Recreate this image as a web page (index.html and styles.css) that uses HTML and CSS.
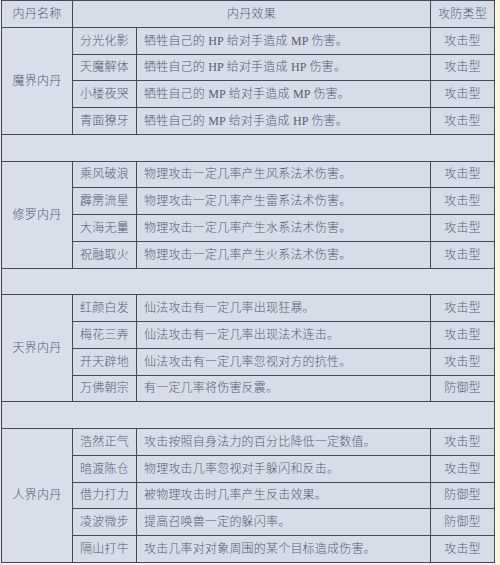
FILE: index.html
```html
<!DOCTYPE html>
<html lang="zh">
<head>
<meta charset="utf-8">
<title>内丹效果</title>
<link rel="stylesheet" href="styles.css">
</head>
<body>
<div class="page">
<table class="pills">
  <colgroup>
    <col class="c-group">
    <col class="c-name">
    <col class="c-desc">
    <col class="c-type">
  </colgroup>
  <tr class="head">
    <td>内丹名称</td>
    <td colspan="2">内丹效果</td>
    <td>攻防类型</td>
  </tr>

  <tr><td class="group" rowspan="4">魔界内丹</td><td class="name">分光化影</td><td class="desc">牺牲自己的 HP 给对手造成 MP 伤害。</td><td class="type">攻击型</td></tr>
  <tr><td class="name">天魔解体</td><td class="desc">牺牲自己的 HP 给对手造成 HP 伤害。</td><td class="type">攻击型</td></tr>
  <tr><td class="name">小楼夜哭</td><td class="desc">牺牲自己的 MP 给对手造成 MP 伤害。</td><td class="type">攻击型</td></tr>
  <tr><td class="name">青面獠牙</td><td class="desc">牺牲自己的 MP 给对手造成 HP 伤害。</td><td class="type">攻击型</td></tr>
  <tr class="spacer"><td colspan="4"></td></tr>

  <tr><td class="group" rowspan="4">修罗内丹</td><td class="name">乘风破浪</td><td class="desc">物理攻击一定几率产生风系法术伤害。</td><td class="type">攻击型</td></tr>
  <tr><td class="name">霹雳流星</td><td class="desc">物理攻击一定几率产生雷系法术伤害。</td><td class="type">攻击型</td></tr>
  <tr><td class="name">大海无量</td><td class="desc">物理攻击一定几率产生水系法术伤害。</td><td class="type">攻击型</td></tr>
  <tr><td class="name">祝融取火</td><td class="desc">物理攻击一定几率产生火系法术伤害。</td><td class="type">攻击型</td></tr>
  <tr class="spacer"><td colspan="4"></td></tr>

  <tr><td class="group" rowspan="4">天界内丹</td><td class="name">红颜白发</td><td class="desc">仙法攻击有一定几率出现狂暴。</td><td class="type">攻击型</td></tr>
  <tr><td class="name">梅花三弄</td><td class="desc">仙法攻击有一定几率出现法术连击。</td><td class="type">攻击型</td></tr>
  <tr><td class="name">开天辟地</td><td class="desc">仙法攻击有一定几率忽视对方的抗性。</td><td class="type">攻击型</td></tr>
  <tr><td class="name">万佛朝宗</td><td class="desc">有一定几率将伤害反震。</td><td class="type">防御型</td></tr>
  <tr class="spacer"><td colspan="4"></td></tr>

  <tr><td class="group" rowspan="5">人界内丹</td><td class="name">浩然正气</td><td class="desc">攻击按照自身法力的百分比降低一定数值。</td><td class="type">攻击型</td></tr>
  <tr><td class="name">暗渡陈仓</td><td class="desc">物理攻击几率忽视对手躲闪和反击。</td><td class="type">攻击型</td></tr>
  <tr><td class="name">借力打力</td><td class="desc">被物理攻击时几率产生反击效果。</td><td class="type">防御型</td></tr>
  <tr><td class="name">凌波微步</td><td class="desc">提高召唤兽一定的躲闪率。</td><td class="type">防御型</td></tr>
  <tr><td class="name">隔山打牛</td><td class="desc">攻击几率对对象周围的某个目标造成伤害。</td><td class="type">攻击型</td></tr>
</table>
</div>
</body>
</html>
```

FILE: styles.css
```css
html, body {
  margin: 0;
  padding: 0;
  background: #fcf8da;
}

.page {
  width: 500px;
  height: 565px;
  padding: 0 0 0 1px;
  box-sizing: border-box;
  background: linear-gradient(to right, #e6e8e6 0, #e6e8e6 1px, transparent 1px);
}

.pills {
  border-collapse: collapse;
  table-layout: fixed;
  width: 493px;
  background: #d6dde9;
  font-family: "Liberation Serif", "Noto Sans CJK SC", serif;
  font-size: 12px;
  font-weight: 300;
  color: #555a72;
}

.c-group { width: 71px; }
.c-name { width: 64px; }
.c-desc { width: 294px; }
.c-type { width: 64px; }

.pills td {
  border: 1px solid #434957;
  height: 26.75px;
  padding: 0;
  text-align: center;
  vertical-align: middle;
  white-space: nowrap;
  line-height: 1;
  letter-spacing: 0.2px;
  box-sizing: border-box;
}

.pills td.desc {
  text-align: left;
  padding-left: 7px;
}

.pills td.group {
  background: #d8dfea;
}

.pills .spacer td {
  background: #d8dfeb;
}
```
